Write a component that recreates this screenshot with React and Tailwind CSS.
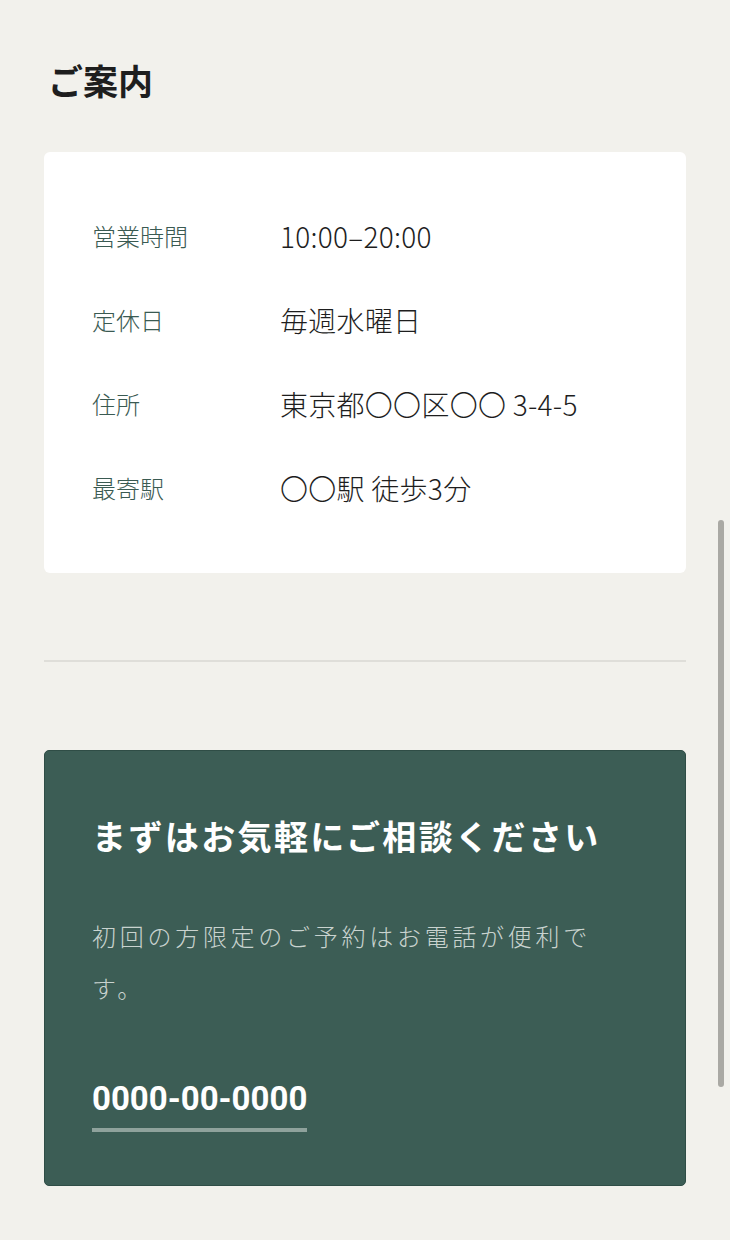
import React from "react";

const info = [
  { label: "営業時間", value: "10:00–20:00" },
  { label: "定休日", value: "毎週水曜日" },
  { label: "住所", value: "東京都〇〇区〇〇 3-4-5" },
  { label: "最寄駅", value: "〇〇駅 徒歩3分" },
];

const jp = { fontFamily: '"Noto Sans CJK JP", "Noto Sans", sans-serif' };

export default function App() {
  return (
    <div
      className="relative h-[1240px] overflow-hidden bg-[#f2f1ec] px-[44px] pt-[58px]"
      style={jp}
    >
      {/* Guide */}
      <h2 className="pl-[4px] text-[35px] leading-[44px] font-bold text-[#1e1e1e]">ご案内</h2>

      <div className="mt-[50px] rounded-md bg-white px-[48px] pt-[64px] pb-[65px]">
        <dl className="flex flex-col gap-[44px]">
          {info.map((row) => (
            <div key={row.label} className="flex items-start">
              <dt className="w-[188px] shrink-0 text-[24px] leading-[40px] font-light text-[#3a5a52]">
                {row.label}
              </dt>
              <dd className="text-[28px] leading-[40px] font-light tracking-[0.01em] text-[#1e1e1e]">
                {row.value}
              </dd>
            </div>
          ))}
        </dl>
      </div>

      <div className="mt-[87px] h-[2px] bg-[#dfded9]" />

      {/* Contact */}
      <div className="mt-[88px] rounded-[5px] border border-[#2f4d46] bg-[#3c5d55] px-[47px] pt-[61px] pb-[53px]">
        <h3 className="text-[34px] leading-[48px] font-bold tracking-[0.07em] text-white">
          まずはお気軽にご相談ください
        </h3>
        <p className="mt-[50px] w-[520px] text-[24px] leading-[52px] font-light tracking-[0.155em] text-[#c9d3cf]">
          初回の方限定のご予約はお電話が便利です。
        </p>
        <a
          href="#"
          className="mt-[63px] inline-block border-b-4 border-[#8fa29c] pb-[7px] text-[33px] leading-[44px] font-bold text-white"
          style={{ fontFamily: 'Roboto, "Noto Sans", sans-serif' }}
        >
          0000-00-0000
        </a>
      </div>

      {/* overlay scrollbar */}
      <div className="absolute top-[520px] right-[6px] h-[567px] w-[6px] rounded-full bg-[#aaa9a4]" />
    </div>
  );
}
